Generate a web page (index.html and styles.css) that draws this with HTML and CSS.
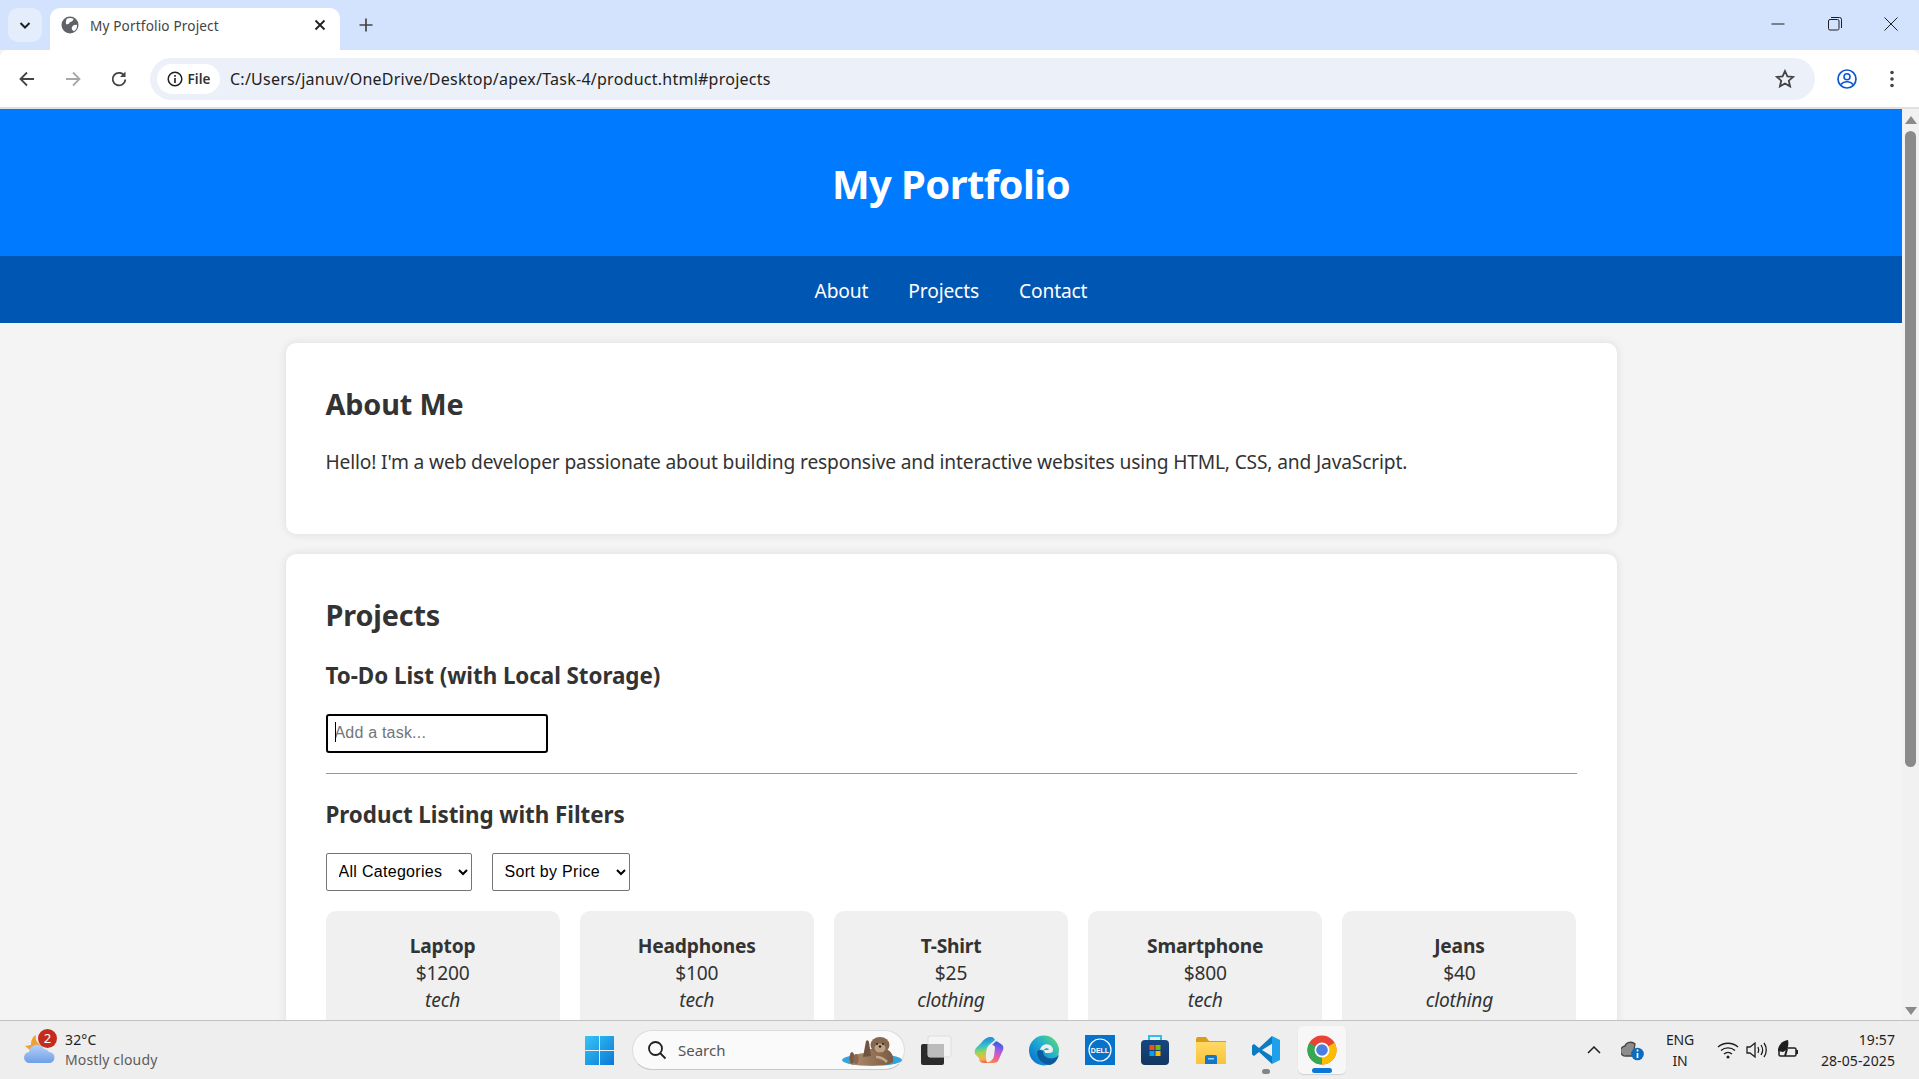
FILE: index.html
```html
<!DOCTYPE html>
<html lang="en">
<head>
<meta charset="utf-8">
<title>My Portfolio Project</title>
<link rel="stylesheet" href="styles.css">
</head>
<body>
<div class="browser">
  <div class="tabstrip">
    <div class="tab-search"><svg width="14" height="14" viewBox="0 0 14 14"><path d="M2.500 5l4.500 4.500L11.500 5" fill="none" stroke="#1f1f1f" stroke-width="2"/></svg></div>
    <div class="tab">
      <svg class="favicon" width="18" height="18" viewBox="0 0 18 18"><circle cx="9" cy="9" r="8.500" fill="#5f6368"/><path d="M6 2.500c2-.8 4.500-.8 6.500.2-.2 1.800-1.500 3-3.500 3.300-.5 1.500-2 2.500-3.800 2.300C4.500 6.500 5 4 6 2.500zM16 9c.3 2.800-1 5-3 6.200-1.500-.6-2.500-2-2.200-3.700.5-1.800 3-3.300 5.200-2.500z" fill="#fff"/></svg>
      <span class="tab-title">My Portfolio Project</span>
      <svg class="tab-close" width="12" height="12" viewBox="0 0 12 12"><path d="M1.500 1.500l9 9m0-9l-9 9" stroke="#1f1f1f" stroke-width="1.800"/></svg>
    </div>
    <svg class="new-tab" width="14" height="14" viewBox="0 0 14 14"><path d="M7 .5v13M.5 7h13" stroke="#444" stroke-width="1.700"/></svg>
    <div class="winctl">
      <div class="winbtn"><svg width="14" height="14" viewBox="0 0 14 14"><path d="M.5 7h13" stroke="#1f1f1f" stroke-width="1"/></svg></div>
      <div class="winbtn"><svg width="14" height="14" viewBox="0 0 14 14"><rect x=".5" y="2.500" width="10.500" height="10.500" rx="1.500" fill="none" stroke="#1f1f1f"/><path d="M3 .5h8.500a2 2 0 0 1 2 2V11" fill="none" stroke="#1f1f1f"/></svg></div>
      <div class="winbtn winbtn-close"><svg width="14" height="14" viewBox="0 0 14 14"><path d="M.5.5l13 13m0-13l-13 13" stroke="#1f1f1f" stroke-width="1"/></svg></div>
    </div>
  </div>
  <div class="toolbar">
    <div class="navbtn"><svg width="18" height="18" viewBox="0 0 18 18"><path d="M16 9H3M9 2.500L2.500 9 9 15.500" fill="none" stroke="#444" stroke-width="1.800"/></svg></div>
    <div class="navbtn"><svg width="18" height="18" viewBox="0 0 18 18"><path d="M2 9h13M9 2.500L15.500 9 9 15.500" fill="none" stroke="#a8a8a8" stroke-width="1.800"/></svg></div>
    <div class="navbtn"><svg width="18" height="18" viewBox="0 0 18 18"><path d="M14.500 6A6.300 6.300 0 1 0 15.300 9.500" fill="none" stroke="#444" stroke-width="1.800"/><path d="M15.500 1.500V7H10z" fill="#444"/></svg></div>
    <div class="omnibox">
      <div class="chip"><svg width="16" height="16" viewBox="0 0 16 16"><circle cx="8" cy="8" r="6.800" fill="none" stroke="#1f1f1f" stroke-width="1.500"/><path d="M8 7v5M8 4v1.800" stroke="#1f1f1f" stroke-width="1.600"/></svg><span>File</span></div>
      <span class="url">C:/Users/januv/OneDrive/Desktop/apex/Task-4/product.html#projects</span>
      <svg class="star" width="20" height="20" viewBox="0 0 20 20"><path d="M10 2l2.400 5.300 5.700.6-4.300 3.800 1.300 5.700L10 14.500l-5.100 2.900 1.300-5.700L1.900 7.900l5.700-.6z" fill="none" stroke="#444" stroke-width="1.800"/></svg>
    </div>
    <div class="toolbtn profile"><svg width="20" height="20" viewBox="0 0 20 20"><circle cx="10" cy="10" r="9" fill="none" stroke="#0b57d0" stroke-width="1.700"/><circle cx="10" cy="7.700" r="3" fill="none" stroke="#0b57d0" stroke-width="1.600"/><path d="M4 15.500c1.500-2 3.500-2.800 6-2.800s4.500.8 6 2.800" fill="none" stroke="#0b57d0" stroke-width="1.600"/></svg></div>
    <div class="toolbtn"><svg width="6" height="18" viewBox="0 0 6 18"><circle cx="3" cy="2.500" r="1.800" fill="#444"/><circle cx="3" cy="9" r="1.800" fill="#444"/><circle cx="3" cy="15.500" r="1.800" fill="#444"/></svg></div>
  </div>
</div>

<div class="viewport">
  <div class="page">
    <header class="site-header"><h1>My Portfolio</h1></header>
    <nav class="site-nav"><a>About</a><a>Projects</a><a>Contact</a></nav>
    <main class="content">
      <section class="card about">
        <h2>About Me</h2>
        <p>Hello! I'm a web developer passionate about building responsive and interactive websites using HTML, CSS, and JavaScript.</p>
      </section>
      <section class="card">
        <h2>Projects</h2>
        <h3 class="todo-title">To-Do List (with Local Storage)</h3>
        <div class="task-input-wrap"><input class="task-input" type="text" placeholder="Add a task..."><i class="caret"></i></div>
        <hr class="rule">
        <h3 class="product-title">Product Listing with Filters</h3>
        <div class="filters">
          <select class="filter filter-cat"><option>All Categories</option></select>
          <select class="filter filter-sort"><option>Sort by Price</option></select>
        </div>
        <div class="products">
          <article class="product"><strong>Laptop</strong><span>$1200</span><em>tech</em></article>
          <article class="product"><strong>Headphones</strong><span>$100</span><em>tech</em></article>
          <article class="product"><strong>T-Shirt</strong><span>$25</span><em>clothing</em></article>
          <article class="product"><strong>Smartphone</strong><span>$800</span><em>tech</em></article>
          <article class="product"><strong>Jeans</strong><span>$40</span><em>clothing</em></article>
        </div>
      </section>
    </main>
  </div>
  <div class="scrollbar">
    <svg width="14" height="10" viewBox="0 0 14 10"><path d="M7 1l6 8H1z" fill="#8a8a8a"/></svg>
    <div class="thumb"></div>
    <svg class="arrow-down" width="14" height="10" viewBox="0 0 14 10"><path d="M7 9L1 1h12z" fill="#8a8a8a"/></svg>
  </div>
</div>

<footer class="taskbar">
  <div class="weather">
    <div class="weather-icon">
      <svg width="32" height="36" viewBox="0 0 32 36"><defs><linearGradient id="cl" x1="0" y1="0" x2="0" y2="1"><stop offset="0" stop-color="#b4d0fa"/><stop offset="1" stop-color="#6f9fe6"/></linearGradient></defs><path d="M13 3c-1 5 1 8 5 10l-11 5-5-4 6-1c0-4 1-8 5-10z" fill="#f0a030"/><path d="M7 31a5.500 5.500 0 0 1-1-11 8 8 0 0 1 15-3 6.500 6.500 0 0 1 5 3 5.500 5.500 0 0 1 0 11z" fill="url(#cl)"/></svg>
      <span class="badge">2</span>
    </div>
    <div class="weather-text"><span class="temp">32°C</span><span class="cond">Mostly cloudy</span></div>
  </div>
  <svg class="winlogo" width="29" height="29" viewBox="0 0 29 29"><defs><linearGradient id="wg" x1="0" y1="0" x2="1" y2="1"><stop offset="0" stop-color="#36c5f5"/><stop offset="1" stop-color="#0a78d6"/></linearGradient></defs><path d="M0 0h14v14H0zM15 0h14v14H15zM0 15h14v14H0zM15 15h14v14H15z" fill="url(#wg)"/></svg>
  <div class="searchbox">
    <svg width="20" height="20" viewBox="0 0 20 20"><circle cx="8.500" cy="8.500" r="6.500" fill="none" stroke="#1f1f1f" stroke-width="1.800"/><path d="M13 13l5.500 5.500" stroke="#1f1f1f" stroke-width="1.800"/></svg>
    <span>Search</span>
    <svg class="otter" width="62" height="36" viewBox="0 0 62 36"><defs><linearGradient id="ot" x1="0" y1="0" x2="1" y2="0"><stop offset="0" stop-color="#b08e70"/><stop offset="1" stop-color="#7a5a42"/></linearGradient></defs><ellipse cx="30" cy="28" rx="30" ry="6" fill="#36a3dc"/><path d="M8 30c0-6 8-9 16-9l4-4h16c6 2 8 8 7 13-4 3-8 3-14 3H12c-3 0-4-1-4-3z" fill="url(#ot)"/><path d="M21 25L24 9q2-2 3 1l2 14z" fill="#6f5440"/><ellipse cx="10" cy="26" rx="2.500" ry="6" fill="#7a5a42"/><ellipse cx="14" cy="27" rx="2.500" ry="5" fill="#8a6a50"/><ellipse cx="38" cy="13" rx="9.500" ry="8" fill="#87674c"/><ellipse cx="38" cy="16" rx="5.500" ry="4.500" fill="#bda184"/><circle cx="35" cy="12" r="1" fill="#222"/><circle cx="41" cy="12" r="1" fill="#222"/><circle cx="38" cy="14.500" r="1.200" fill="#222"/><path d="M34 25c4 0 8 2 11 5" fill="none" stroke="#c4a88c" stroke-width="2.500"/></svg>
  </div>
  <div class="apps">
    <div class="app">
      <svg width="48" height="48" viewBox="0 0 48 48"><rect x="12" y="18" width="23" height="21" rx="2" fill="#2b2b2b"/><rect x="19" y="10" width="23" height="21" rx="2" fill="#f5f5f5" fill-opacity=".8" stroke="#ddd"/><rect x="19" y="18" width="16" height="13" fill="#bcbcbc"/></svg>
    </div>
    <div class="app">
      <svg width="30" height="28" viewBox="0 0 30 28"><defs><linearGradient id="cp" x1=".3" y1="0" x2=".4" y2="1"><stop offset="0" stop-color="#1f7fe0"/><stop offset=".35" stop-color="#35c2c8"/><stop offset=".6" stop-color="#a6d44e"/><stop offset=".85" stop-color="#f6b340"/><stop offset="1" stop-color="#f0604a"/></linearGradient><linearGradient id="cp2" x1=".6" y1="0" x2=".4" y2="1"><stop offset="0" stop-color="#2a5fe0"/><stop offset=".4" stop-color="#a45be6"/><stop offset=".75" stop-color="#ee5f9a"/><stop offset="1" stop-color="#f48a4a"/></linearGradient></defs><path d="M8 6c2-3 5-5 9-5 2 0 3 1 4 3l-6 5c-3 3-3 8-3 13 0 3 1 5 3 5h-5c-4 0-5-3-5-5L1 18c-1-3 0-5 2-7z" fill="url(#cp)"/><path d="M19 27c3 0 5-1 6-4l4-9c1-3 0-5-2-6l-3-2c-1-1-2-1-3 0l-3 3s3 0 3 3l-1 8c-1 4-4 6-8 7z" fill="url(#cp2)"/></svg>
    </div>
    <div class="app">
      <svg width="30" height="31" viewBox="0 0 30 31"><defs><linearGradient id="ed" x1=".9" y1=".1" x2=".1" y2=".8"><stop offset="0" stop-color="#58d57c"/><stop offset=".45" stop-color="#22b0cf"/><stop offset="1" stop-color="#0c78cf"/></linearGradient></defs><circle cx="15" cy="15.500" r="15" fill="url(#ed)"/><path d="M8 17c0 7 6 13 13 13 4-1 7-4 9-10-3 3-7 4-11 3-3-1-5-3-5-6 0-1-2-2-3-2-2 0-3 1-3 2z" fill="#0e5a9e"/><path d="M11 15c1-5 6-7 10-5 2 1 3 3 3 5 0 2-1 3-4 3h-4c0-2-1-4-5-3zM15 11.500" fill="#eee"/><path d="M15 15c1-2 3-2 5-1l-1 1z" fill="#1fa0d0"/></svg>
    </div>
    <div class="app">
      <svg width="30" height="30" viewBox="0 0 30 30"><rect width="30" height="30" fill="#0672cb"/><circle cx="15" cy="15" r="11" fill="none" stroke="#fff" stroke-width="1.200"/><text class="dell-word" x="15" y="17.500" text-anchor="middle">DELL</text></svg>
    </div>
    <div class="app">
      <svg width="28" height="30" viewBox="0 0 28 30"><defs><linearGradient id="st" x1="0" y1="0" x2="0" y2="1"><stop offset="0" stop-color="#17477f"/><stop offset="1" stop-color="#133660"/></linearGradient></defs><path d="M8 6V1h12v5" fill="none" stroke="#2cc0f0" stroke-width="2"/><rect y="5" width="28" height="25" rx="4" fill="url(#st)"/><rect x="8.500" y="10" width="5" height="5" fill="#f25022"/><rect x="14.500" y="10" width="5" height="5" fill="#7fba00"/><rect x="8.500" y="16" width="5" height="5" fill="#00a4ef"/><rect x="14.500" y="16" width="5" height="5" fill="#ffb900"/></svg>
    </div>
    <div class="app">
      <svg width="30" height="27" viewBox="0 0 30 27"><defs><linearGradient id="fo" x1="0" y1="0" x2="0" y2="1"><stop offset="0" stop-color="#ffd965"/><stop offset="1" stop-color="#f9c33a"/></linearGradient></defs><path d="M0 2a2 2 0 0 1 2-2h8l3 4h17v6H0z" fill="#d99d1c"/><rect y="5" width="30" height="22" rx="1" fill="url(#fo)"/><path d="M9 20a2 2 0 0 1 2-2h8a2 2 0 0 1 2 2v7H9z" fill="#1178c8"/><rect x="12" y="21" width="6" height="1.500" fill="#9bd2f5"/></svg>
    </div>
    <div class="app app-running">
      <svg width="30" height="30" viewBox="0 0 30 30"><path d="M21 1L8 13 3 9 1 10.500v9L3 21l5-4 13 12 1-7-11-7 11-7z" fill="#0a7cc4"/><path d="M21 1l8 4v20l-8 4z" fill="#1ea0ea"/></svg>
      <i class="run-dot"></i>
    </div>
    <div class="app app-active">
      <svg width="30" height="30" viewBox="0 0 32 32"><circle cx="16" cy="16" r="15.500" fill="#ea4335"/><path d="M16 16L29.400 8.200A15.500 15.500 0 0 1 16 31.500z" fill="#fbbc04"/><path d="M16 16L16 31.500A15.500 15.500 0 0 1 2.600 8.200z" fill="#34a853"/><circle cx="16" cy="16" r="8" fill="#fff"/><circle cx="16" cy="16" r="6.200" fill="#4a7fe0"/></svg>
      <i class="run-bar"></i>
    </div>
  </div>
  <div class="tray">
    <svg class="t-caret" width="14" height="8" viewBox="0 0 14 8"><path d="M1 7l6-6 6 6" fill="none" stroke="#1f1f1f" stroke-width="1.500"/></svg>
    <svg class="t-cloud" width="24" height="22" viewBox="0 0 24 22"><path d="M5 17a5 5 0 0 1-1-10c1-4 7-5 10-2l-2 12z" fill="#8c8c8c" stroke="#444" stroke-width="1.300"/><circle cx="16.500" cy="15" r="6.300" fill="#0b6cbd"/><path d="M16.500 14v5M16.500 10.500v2" stroke="#fff" stroke-width="1.700"/></svg>
    <div class="t-lang"><span>ENG</span><span>IN</span></div>
    <svg class="t-wifi" width="22" height="20" viewBox="0 0 22 20"><path d="M1 7c5.500-5 14.500-5 20 0M4 10.500c4-3.500 10-3.500 14 0M7 14c2.300-2 5.700-2 8 0" fill="none" stroke="#1f1f1f" stroke-width="1.400"/><circle cx="11" cy="17" r="1.500" fill="#1f1f1f"/></svg>
    <svg class="t-vol" width="22" height="20" viewBox="0 0 22 20"><path d="M1 7h3l5-4v14l-5-4H1z" fill="none" stroke="#1f1f1f" stroke-width="1.300"/><path d="M12 7c1 2 1 4 0 6M15 5c2 3 2 7 0 10M18 3c3 4 3 10 0 14" fill="none" stroke="#1f1f1f" stroke-width="1.300"/></svg>
    <svg class="t-batt" width="22" height="22" viewBox="0 0 22 22"><rect x="2" y="9" width="17" height="8" rx="1.500" fill="none" stroke="#1f1f1f" stroke-width="1.500"/><rect x="19" y="11" width="2" height="4" fill="#1f1f1f"/><path d="M1 12C1 6 5 2 11 1c1 5 0 10-5 12z" fill="#1f1f1f"/><path d="M10 10l-2 7" stroke="#1f1f1f" stroke-width="2"/></svg>
    <div class="t-clock"><span>19:57</span><span>28-05-2025</span></div>
  </div>
</footer>
</body>
</html>
```

FILE: styles.css
```css
* { box-sizing: border-box; }
html, body { margin: 0; height: 100%; overflow: hidden; }
body {
  display: flex;
  flex-direction: column;
  font-family: "Noto Sans", "Liberation Sans", sans-serif;
  color: #333;
  background: #f4f4f4;
}
svg { display: block; flex: none; }

/* Browser chrome */
.browser { flex: none; }
.tabstrip {
  height: 50px;
  background: #d3e3fd;
  display: flex;
  align-items: flex-end;
  padding-left: 8px;
}
.tab-search {
  width: 34px;
  height: 34px;
  margin-bottom: 8px;
  border-radius: 10px;
  background: #e4edfc;
  display: flex;
  align-items: center;
  justify-content: center;
}
.tab {
  width: 290px;
  height: 42px;
  margin-left: 8px;
  background: #fff;
  border-radius: 10px 10px 0 0;
  display: flex;
  align-items: center;
  padding: 0 14px 8px 11px;
  font-size: 13.600px;
  letter-spacing: .15px;
  color: #444;
}
.tab-title { margin-left: 11px; flex: 1; }
.new-tab { margin: 0 0 18px 19px; }
.winctl { margin-left: auto; display: flex; align-self: flex-start; }
.winbtn { width: 57px; height: 48px; display: flex; align-items: center; justify-content: center; }
.winbtn-close { width: 56px; }
.toolbar {
  height: 59px;
  background: #fff;
  border-bottom: 2px solid #e0e0e0;
  border-radius: 8px 8px 0 0;
  display: flex;
  align-items: center;
  padding: 0 5px 0 4px;
}
.navbtn { width: 46px; height: 40px; display: flex; align-items: center; justify-content: center; }
.omnibox {
  flex: 1;
  height: 42px;
  margin-left: 8px;
  background: #ebf0f9;
  border-radius: 21px;
  display: flex;
  align-items: center;
  padding: 0 18px 0 7px;
}
.chip {
  width: 63px;
  height: 30px;
  border-radius: 15px;
  background: #fff;
  display: flex;
  align-items: center;
  justify-content: center;
  gap: 5px;
  font-size: 13.500px;
  font-weight: 600;
  color: #333;
}
.url { margin-left: 10px; flex: 1; font-size: 16px; letter-spacing: .25px; color: #222; }
.star { margin-right: 2px; }
.toolbtn { width: 45px; height: 40px; display: flex; align-items: center; justify-content: center; }
.profile { margin-left: 9px; }

/* Page */
.viewport { flex: 1; min-height: 0; display: flex; }
.page { flex: 1; min-width: 0; overflow: hidden; background: #f4f4f4; }
.site-header {
  height: 147px;
  background: #007bff;
  color: #fff;
  display: flex;
  align-items: center;
  justify-content: center;
}
.site-header h1 { margin: 1px 0 0; font-size: 40px; letter-spacing: -.6px; font-weight: 700; }
.site-nav {
  height: 67px;
  padding-top: 2px;
  background: #0056b3;
  display: flex;
  align-items: center;
  justify-content: center;
  gap: 40px;
  color: #fff;
  font-size: 19.200px;
  letter-spacing: -.15px;
}
.content { width: 1331px; margin: 20px auto 0; display: flex; flex-direction: column; gap: 20px; }
.card {
  background: #fff;
  border-radius: 10px;
  padding: 40px;
  box-shadow: 0 0 10px rgba(0, 0, 0, .1);
}
.card h2 { margin: 0; font-size: 28.800px; line-height: 42px; letter-spacing: -.15px; }
.card p { margin: 22px 0 17px; font-size: 19.200px; line-height: 30px; letter-spacing: -.16px; }
.card h3 { margin: 0; font-size: 22.400px; line-height: 32px; letter-spacing: -.05px; }
.todo-title { padding-top: 24px; }
.task-input-wrap { position: relative; width: 222px; margin-top: 22px; }
.task-input {
  display: block;
  width: 100%;
  height: 39px;
  padding: 0 7px 2px;
  border: 2px solid #000;
  border-radius: 3px;
  outline: none;
  font: 16px "Liberation Sans", sans-serif;
  letter-spacing: .2px;
}
.task-input::placeholder { color: #757575; opacity: 1; }
.caret { position: absolute; left: 9px; top: 8px; width: 1px; height: 20px; background: #000; }
.rule { margin: 20px 0 0; border: 0; border-top: 1px solid #999; }
.card .product-title { margin-top: 25px; }
.filters { display: flex; gap: 20px; margin-top: 22px; }
.filter {
  height: 38px;
  padding: 0 8px 2px;
  border: 1px solid #767676;
  border-radius: 2px;
  background-color: #fff;
  color: #000;
  font: 16px "Liberation Sans", sans-serif;
  letter-spacing: .3px;
}
.filter-cat { width: 146px; }
.filter-sort { width: 138px; }
.products { display: grid; grid-template-columns: repeat(5, 1fr); gap: 20px; margin-top: 20px; }
.product {
  height: 240px;
  background: #f0f0f0;
  border-radius: 10px;
  padding-top: 21px;
  display: flex;
  flex-direction: column;
  align-items: center;
  font-size: 19.200px;
  line-height: 27px;
  letter-spacing: -.2px;
}

/* Scrollbar */
.scrollbar { width: 17px; flex: none; background: #f1f1f1; display: flex; flex-direction: column; align-items: center; padding: 6px 0 4px; }
.thumb { width: 11px; height: 636px; margin-top: 6px; border-radius: 6px; background: #8a8a8a; }
.arrow-down { margin-top: auto; }

/* Taskbar */
.taskbar {
  flex: none;
  height: 59px;
  background: #eee;
  border-top: 1px solid #c2c2c2;
  display: flex;
  align-items: center;
  font-size: 14px;
  color: #1f1f1f;
}
.weather { width: 585px; display: flex; padding-left: 23px; align-items: center; }
.weather-icon { position: relative; width: 32px; height: 36px; }
.badge {
  position: absolute;
  left: 15px;
  top: -3px;
  width: 19px;
  height: 19px;
  border-radius: 50%;
  background: #c42b1c;
  color: #fff;
  font-size: 13px;
  line-height: 19px;
  text-align: center;
}
.weather-text { display: flex; flex-direction: column; margin-left: 10px; font-size: 14px; line-height: 20px; letter-spacing: .15px; }
.cond { color: #5c5c5c; }
.winlogo { margin-top: 1px; }
.searchbox {
  width: 273px;
  height: 40px;
  margin-left: 18px;
  background: #fafafa;
  border: 1px solid #dcdcdc;
  border-bottom-color: #c8c8c8;
  border-radius: 20px;
  display: flex;
  align-items: center;
  padding-left: 14px;
  font-size: 15px;
  letter-spacing: 0;
  color: #555;
}
.searchbox span { margin-left: 11px; flex: 1; }
.apps { display: flex; gap: 7.500px; margin-left: 4px; }
.app { width: 48px; height: 48px; display: flex; align-items: center; justify-content: center; position: relative; border-radius: 5px; }
.app-active { background: #f7f7f7; box-shadow: 0 1px 1px rgba(0,0,0,.12); }
.run-dot { position: absolute; bottom: 0; left: 20px; width: 8px; height: 5px; border-radius: 3px; background: #858585; }
.run-bar { position: absolute; bottom: 1px; left: 14px; width: 20px; height: 5px; border-radius: 3px; background: #0a78d6; }
.dell-word { font: 700 7px "Liberation Sans", sans-serif; fill: #fff; }
.tray { margin-left: auto; padding-right: 24px; display: flex; align-items: center; }
.t-cloud { margin-left: 20px; }
.t-lang, .t-clock { display: flex; flex-direction: column; line-height: 21px; font-size: 14px; }
.t-lang { width: 40px; margin-left: 15px; align-items: center; letter-spacing: -.2px; }
.t-wifi { margin-left: 17px; }
.t-vol { margin-left: 7px; }
.t-batt { margin-left: 9px; }
.t-clock { width: 90px; margin-left: 6px; align-items: flex-end; letter-spacing: .1px; }
```
